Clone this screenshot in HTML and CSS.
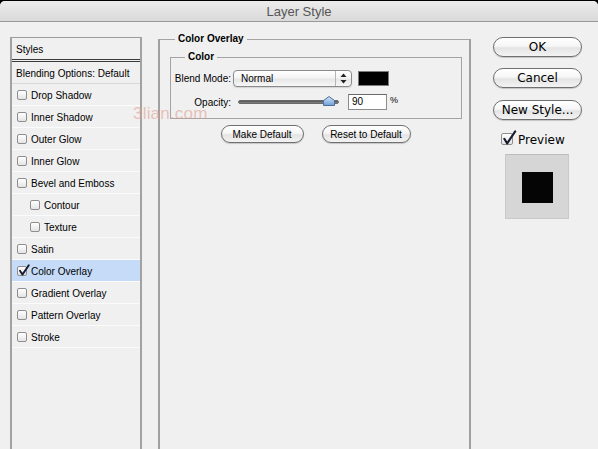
FILE: index.html
```html
<!DOCTYPE html>
<html>
<head>
<meta charset="utf-8">
<link rel="stylesheet" href="styles.css">
</head>
<body>
<div class="window">
  <div class="titlebar">Layer Style</div>
  <div class="main">
    <div class="styles-panel">
      <div class="row head">Styles</div>
      <div class="row blend">Blending Options: Default</div>
      <div class="row"><span class="cb"></span>Drop Shadow</div>
      <div class="row"><span class="cb"></span>Inner Shadow</div>
      <div class="row"><span class="cb"></span>Outer Glow</div>
      <div class="row"><span class="cb"></span>Inner Glow</div>
      <div class="row"><span class="cb"></span>Bevel and Emboss</div>
      <div class="row sub"><span class="cb"></span>Contour</div>
      <div class="row sub"><span class="cb"></span>Texture</div>
      <div class="row"><span class="cb"></span>Satin</div>
      <div class="row selected"><span class="cb"><svg class="check" width="12" height="13" viewBox="0 0 12 13"><path d="M2 6.8 L4.4 10.6 L10.8 1.2" fill="none" stroke="#1a1a2e" stroke-width="1.9" stroke-linecap="round" stroke-linejoin="round"/></svg></span>Color Overlay</div>
      <div class="row"><span class="cb"></span>Gradient Overlay</div>
      <div class="row"><span class="cb"></span>Pattern Overlay</div>
      <div class="row"><span class="cb"></span>Stroke</div>
    </div>

    <fieldset class="group outer">
      <legend>Color Overlay</legend>
      <fieldset class="group inner">
        <legend>Color</legend>
        <div class="form">
          <span class="lbl">Blend Mode:</span>
          <div class="ctl">
            <div class="select"><span class="sel-text">Normal</span><span class="arrows"><svg width="7" height="11" viewBox="0 0 7 11"><path d="M3.5 0.5 L6.5 4 L0.5 4 Z" fill="#222"/><path d="M0.5 7 L6.5 7 L3.5 10.5 Z" fill="#222"/></svg></span></div>
            <div class="swatch"></div>
          </div>
          <span class="lbl opacity-lbl">Opacity:</span>
          <div class="ctl">
            <div class="slider"><div class="track"></div><svg class="thumb" width="12" height="10" viewBox="0 0 12 10"><defs><linearGradient id="tg" x1="0" y1="0" x2="0" y2="1"><stop offset="0" stop-color="#d4e6fa"/><stop offset="1" stop-color="#6c9fd9"/></linearGradient></defs><path d="M0.5 4.5 L6 0.5 L11.5 4.5 L11.5 9.5 L0.5 9.5 Z" fill="url(#tg)" stroke="#4f6f96" stroke-width="1"/></svg></div>
            <div class="num">90</div>
            <span class="pct">%</span>
          </div>
        </div>
      </fieldset>
      <div class="btnrow">
        <button class="btn small">Make Default</button>
        <button class="btn small">Reset to Default</button>
      </div>
    </fieldset>

    <div class="side">
      <button class="btn big">OK</button>
      <button class="btn big">Cancel</button>
      <button class="btn big">New Style...</button>
      <div class="preview-row"><span class="cb big-cb"><svg class="check" width="15" height="16" viewBox="0 0 15 16"><path d="M2.3 8.8 L5.2 13.4 L13.2 1.4" fill="none" stroke="#1a1a2e" stroke-width="2.1" stroke-linecap="round" stroke-linejoin="round"/></svg></span><span class="preview-label">Preview</span></div>
      <div class="preview-box"><div class="preview-swatch"></div></div>
    </div>
  </div>
  <div class="watermark">3lian.com</div>
</div>
</body>
</html>
```

FILE: styles.css
```css
html, body {
  margin: 0;
  padding: 0;
}
body {
  background: #000;
  overflow: hidden;
  font-family: "Liberation Sans", Arial, sans-serif;
  color: #000;
}
.window {
  margin-top: 1px;
  height: 448px;
  background: #f0f0f0;
  border-radius: 5px 5px 0 0;
  overflow: hidden;
  position: relative;
  display: flex;
  flex-direction: column;
}
.titlebar {
  height: 20px;
  line-height: 21px;
  border-bottom: 1px solid #9a9a9a;
  background: linear-gradient(#ececec, #d9d9d9);
  text-align: center;
  font-size: 13px;
  color: #555;
  flex: none;
}
.main {
  flex: 1;
  display: flex;
  align-items: flex-start;
  padding-left: 10px;
}

/* left styles list */
.styles-panel {
  flex: none;
  width: 132px;
  box-sizing: border-box;
  margin-top: 15px;
  height: 520px;
  border-top: 1px solid #9c9c9c;
  border-left: 2px solid #a2a2a2;
  border-right: 2px solid #a2a2a2;
  background: #f0f0f0;
  font-size: 10px;
}
.row {
  border-bottom: 1px solid #fbfbfb;
  display: flex;
  align-items: center;
  padding-left: 5px;
  white-space: nowrap;
  padding-top: 1px;
  box-sizing: border-box;
  height: 22px;
}
.row.head {
  padding-left: 4px;
  height: 24px;
  border-bottom: 3px double #3a3a3a;
}
.row.blend {
  padding-left: 4px;
  border-bottom-color: #d8d8d8;
}
.row.sub {
  padding-left: 18px;
}
.row.selected {
  background: #c5dbf7;
}
.cb {
  position: relative;
  flex: none;
  width: 10px;
  height: 10px;
  box-sizing: border-box;
  border: 1px solid #8e8e8e;
  border-radius: 2px;
  background: linear-gradient(#ffffff, #e4e4e4);
  margin-right: 4px;
}
.cb .check {
  position: absolute;
  left: 0px;
  top: -3px;
  overflow: visible;
}

/* fieldsets */
.group {
  margin: 0;
  padding: 0;
  min-width: 0;
  box-sizing: border-box;
  border: 1px solid #a4a4a4;
}
.group legend {
  padding: 0 3px;
  font-weight: bold;
  font-size: 10px;
  line-height: 12px;
}
.outer {
  flex: none;
  width: 313px;
  height: 520px;
  margin: 11px 0 0 16px;
  border-left: 2px solid #a0a0a0;
  border-right: 2px solid #a0a0a0;
}
.outer > legend {
  margin-left: 15px;
}
.inner {
  margin: 6px 7px 0 10px;
}
.inner > legend {
  margin-left: 14px;
}
.form {
  display: grid;
  grid-template-columns: 60px auto;
  row-gap: 7px;
  column-gap: 2px;
  padding: 7px 0 8px 0;
  font-size: 10px;
  align-items: center;
}
.lbl {
  text-align: right;
  white-space: nowrap;
  line-height: 11px;
}
.ctl {
  display: flex;
  align-items: center;
}
.select {
  width: 119px;
  height: 17px;
  box-sizing: border-box;
  border: 1px solid #8a8a8a;
  border-radius: 4px;
  background: linear-gradient(#ffffff, #f4f4f4 45%, #e6e6e6 55%, #f7f7f7);
  display: flex;
  align-items: center;
  box-shadow: 0 1px 1px rgba(0,0,0,0.12);
}
.sel-text {
  flex: 1;
  padding-left: 7px;
}
.arrows {
  width: 15px;
  height: 100%;
  border-left: 1px solid #b5b5b5;
  display: flex;
  align-items: center;
  justify-content: center;
}
.swatch {
  width: 31px;
  height: 15px;
  box-sizing: border-box;
  margin-left: 6px;
  background: #000;
  border: 1px solid #7a7a7a;
}
.slider {
  position: relative;
  width: 101px;
  height: 16px;
  margin-left: 5px;
  display: flex;
  align-items: center;
}
.track {
  width: 100%;
  height: 4px;
  box-sizing: border-box;
  border-radius: 2px;
  background: linear-gradient(#4e4e4e, #8a8a8a);
  border: 1px solid #6a6a6a;
}
.thumb {
  position: absolute;
  left: 85px;
  top: 2px;
}
.num {
  width: 39px;
  height: 16px;
  box-sizing: border-box;
  margin-left: 9px;
  border: 1px solid #8c8c8c;
  border-top-color: #6a6a6a;
  background: #fff;
  padding-left: 3px;
  line-height: 14px;
  font-size: 10px;
}
.pct {
  margin-left: 3px;
  font-size: 9px;
  align-self: flex-start;
  margin-top: 1px;
}
.btnrow {
  display: flex;
  justify-content: center;
  gap: 18px;
  margin-top: 6px;
  padding-left: 2px;
}

/* buttons */
.btn {
  display: block;
  box-sizing: border-box;
  margin: 0;
  padding: 0;
  border: 1px solid #6f6f6f;
  color: #000;
  background: linear-gradient(#ffffff, #f6f6f6 45%, #e4e4e4 55%, #f3f3f3);
  box-shadow: 0 1px 1px rgba(0,0,0,0.18);
  white-space: nowrap;
}
.btn.small {
  height: 18px;
  border-radius: 9px;
  font-family: "Liberation Sans", Arial, sans-serif;
  font-size: 10px;
}
.btnrow .btn:first-child {
  width: 83px;
}
.btnrow .btn:last-child {
  width: 89px;
}
.side {
  flex: none;
  width: 89px;
  margin: 15px 0 0 22px;
  display: flex;
  flex-direction: column;
}
.btn.big {
  width: 89px;
  height: 20px;
  border-radius: 10px;
  font-family: "DejaVu Sans", sans-serif;
  font-size: 12px;
  margin-bottom: 11px;
}
.btn.big:nth-child(2) {
  margin-bottom: 12px;
}
.btn.big:nth-child(3) {
  margin-bottom: 0;
}
.preview-row {
  display: flex;
  align-items: center;
  margin-top: 13px;
  padding-left: 8px;
  height: 12px;
}
.big-cb {
  width: 12px;
  height: 12px;
  margin-right: 5px;
}
.big-cb .check {
  left: 0px;
  top: -4px;
}
.preview-label {
  font-family: "DejaVu Sans", sans-serif;
  font-size: 12px;
  line-height: 12px;
  padding-top: 1px;
}
.preview-box {
  margin: 9px 0 0 12px;
  width: 64px;
  height: 65px;
  box-sizing: border-box;
  background: #d6d6d6;
  border: 1px solid #c9c9c9;
  border-top-color: #bcbcbc;
  display: flex;
  align-items: center;
  justify-content: center;
}
.preview-swatch {
  width: 31px;
  height: 31px;
  background: #050505;
  margin-top: 2px;
}
.watermark {
  position: absolute;
  left: 133px;
  top: 107px;
  font-size: 17px;
  line-height: 12px;
  color: rgba(222, 150, 140, 0.55);
  letter-spacing: 0.2px;
  pointer-events: none;
}
```
